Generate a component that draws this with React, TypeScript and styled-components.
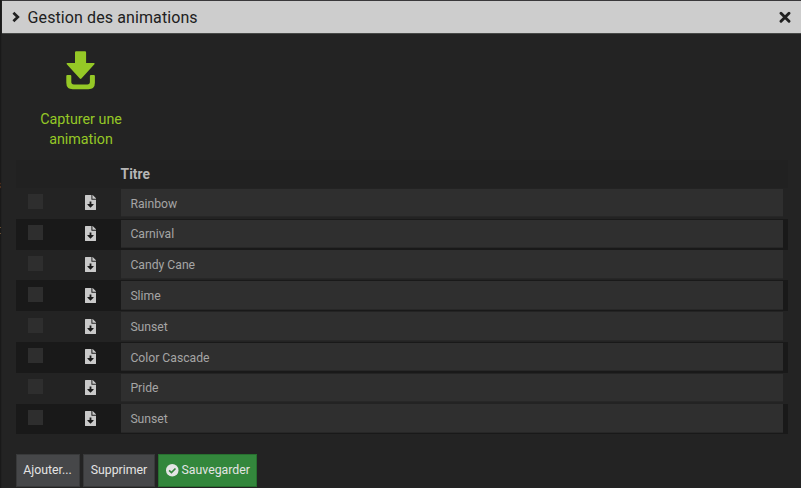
import React from 'react';
import styled, { createGlobalStyle } from 'styled-components';

const GlobalStyle = createGlobalStyle`
  * { box-sizing: border-box; }
  body { margin: 0; background: #232323; font-family: Roboto, sans-serif; overflow: hidden; }
`;

const Page = styled.div`
  display: flex;
  width: 801px;
  height: 488px;
  overflow: hidden;
  background: #232323;
`;

const Backdrop = styled.div`
  flex: 0 0 1px;
  position: relative;
  overflow: hidden;
  background: #191919;
  color: #777;
`;

const Remnant = styled.span<{ $top: number }>`
  position: absolute;
  right: 0;
  top: ${(p) => p.$top}px;
  font-size: 13px;
  line-height: 16px;
`;

const Dialog = styled.main`
  flex: 1;
  min-width: 0;
  display: flex;
  flex-direction: column;
  border-left: 1px solid #202020;
`;

const TitleBar = styled.header`
  height: 34px;
  flex: none;
  display: flex;
  align-items: center;
  padding: 0 10px 0 9px;
  background: #cdcdcd;
  border-top: 1px solid #39383a;
  border-bottom: 1px solid #474947;
  color: #202020;
`;

const Title = styled.h1`
  flex: 1;
  margin: 0 0 0 6.6px;
  padding-top: 1px;
  font-size: 16px;
  line-height: 20px;
  font-weight: 400;
  letter-spacing: 0.1px;
`;

const Capture = styled.button`
  width: 130px;
  height: 126px;
  flex: none;
  margin-left: 14px;
  padding: 17px 15px 0;
  border: 0;
  background: none;
  color: #95c826;
  display: flex;
  flex-direction: column;
  align-items: center;
  font: 400 14.3px/20px Roboto, sans-serif;
`;

const CaptureLabel = styled.span`
  margin-top: 19.4px;
  width: 90px;
  text-align: center;
`;

const TableHead = styled.div`
  display: grid;
  grid-template-columns: 105px 662px 5px;
  align-items: center;
  flex: none;
  width: 772px;
  height: 28px;
  margin-left: 13.6px;
  padding-bottom: 1px;
  background: #212121;
  color: #b5b5b5;
  font-size: 13.8px;
  font-weight: 700;
`;

const HeadCell = styled.span`
  grid-column: 2;
`;

const Table = styled.div`
  width: 772px;
  margin-left: 13.6px;
  flex: none;
`;

const Row = styled.div<{ $dark: boolean }>`
  display: grid;
  grid-template-columns: 12.4px 15px 41.6px 12px 24px 662px;
  height: 30.8px;
  background: ${(p) => (p.$dark ? '#191919' : '#232323')};
`;

const Checkbox = styled.span`
  grid-column: 2;
  width: 15px;
  height: 15px;
  margin-top: 6.4px;
  background: #2e2e2e;
`;

const FileIcon = styled.span`
  grid-column: 4;
  margin-top: 7.4px;
  display: flex;
  justify-content: center;
  color: #c9c9c9;
`;

const Field = styled.div`
  grid-column: 6;
  height: 28.6px;
  margin-top: 0.9px;
  padding: 1.8px 0 0 9.8px;
  display: flex;
  align-items: center;
  background: #2f2f2f;
  border-bottom: 1px solid #272727;
  color: #a5a5a5;
  font-size: 12.2px;
`;

const Actions = styled.footer`
  display: flex;
  gap: 3.4px;
  margin: 19.6px 0 0 13.5px;
`;

const Button = styled.button<{ $width: number; $primary?: boolean }>`
  width: ${(p) => p.$width}px;
  height: 33px;
  padding: 0;
  display: flex;
  align-items: center;
  justify-content: center;
  gap: 3px;
  border: 1px solid ${(p) => (p.$primary ? '#27702f' : '#38393a')};
  background: ${(p) => (p.$primary ? '#33873c' : '#464749')};
  color: #e4e4e4;
  font: 400 12.3px/16px Roboto, sans-serif;
`;

const animations = ['Rainbow', 'Carnival', 'Candy Cane', 'Slime', 'Sunset', 'Color Cascade', 'Pride', 'Sunset'];

const Chevron = () => (
  <svg width="10" height="12" viewBox="0 0 10 12" fill="none" stroke="currentColor" strokeWidth="2.7">
    <path d="M2.4 1.8 L6.8 6 L2.4 10.2" />
  </svg>
);

const CloseIcon = () => (
  <svg width="12" height="12" viewBox="0 0 12 12" fill="none" stroke="currentColor" strokeWidth="2.9" strokeLinecap="round">
    <path d="M2 2.3 L10 10.3 M10 2.3 L2 10.3" />
  </svg>
);

const CheckIcon = () => (
  <svg width="12.5" height="12.5" viewBox="0 0 12 12">
    <circle cx="6" cy="6" r="6" fill="currentColor" />
    <path d="M3 6.2 L5.2 8.3 L9.1 4.3" fill="none" stroke="#33873c" strokeWidth="1.6" />
  </svg>
);

const FileDown = () => (
  <svg width="11" height="15" viewBox="0 0 11 15">
    <path fill="currentColor" d="M0.6 0 H6.4 V4.2 Q6.4 4.7 6.9 4.7 H11 V14.4 Q11 15 10.4 15 H0.6 Q0 15 0 14.4 V0.6 Q0 0 0.6 0 Z M7.4 0 H7.7 L11 3.3 V3.7 H7.4 Z" />
    <path fill="#191919" d="M4.6 6.6 H6.4 V8.9 H8.5 L8.7 9.5 L5.5 12.7 L2.3 9.5 L2.5 8.9 H4.6 Z" />
  </svg>
);

const DownloadIcon = () => (
  <svg width="30" height="39" viewBox="0 0 30 39" fill="currentColor">
    <path d="M10.1 0.3 H19 Q20.1 0.3 20.1 1.5 V12 H28 Q29.2 12.3 28.4 13.3 L15.4 27.6 Q14.6 28.5 13.8 27.6 L0.8 13.3 Q0 12.3 1.2 12 H9 V1.5 Q9 0.3 10.1 0.3 Z" />
    <path d="M0.3 25 Q0.3 24 1.3 24 H4.3 Q5.3 24 5.3 25 V30.8 Q5.3 33.4 7.9 33.4 H21.3 Q23.9 33.4 23.9 30.8 V25 Q23.9 24 24.9 24 H27.9 Q28.9 24 28.9 25 V31.8 Q28.9 38.3 22.4 38.3 H6.8 Q0.3 38.3 0.3 31.8 Z" />
  </svg>
);

export default function App() {
  return (
    <>
      <GlobalStyle />
      <Page>
        <Backdrop>
          <Remnant $top={177}>s</Remnant>
          <Remnant $top={222}>t</Remnant>
        </Backdrop>
        <Dialog>
          <TitleBar>
            <Chevron />
            <Title>Gestion des animations</Title>
            <CloseIcon />
          </TitleBar>
          <Capture>
            <DownloadIcon />
            <CaptureLabel>Capturer une animation</CaptureLabel>
          </Capture>
          <TableHead>
            <HeadCell>Titre</HeadCell>
          </TableHead>
          <Table>
            {animations.map((name, i) => (
              <Row key={i} $dark={i % 2 === 1}>
                <Checkbox />
                <FileIcon>
                  <FileDown />
                </FileIcon>
                <Field>{name}</Field>
              </Row>
            ))}
          </Table>
          <Actions>
            <Button $width={64}>Ajouter...</Button>
            <Button $width={72.2}>Supprimer</Button>
            <Button $width={99}  $primary>
              <CheckIcon />
              Sauvegarder
            </Button>
          </Actions>
        </Dialog>
      </Page>
    </>
  );
}
